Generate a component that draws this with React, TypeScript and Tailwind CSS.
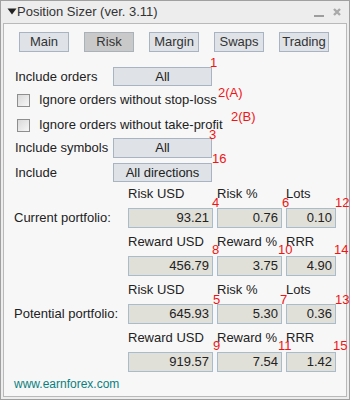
import React from "react";

// red annotation marks laid over the dialog
const marks: { text: string; pos: string }[] = [
  { text: "1", pos: "left-[209px] top-[55px]" },
  { text: "2(A)", pos: "left-[217px] top-[85px]" },
  { text: "2(B)", pos: "left-[230px] top-[109px]" },
  { text: "3", pos: "left-[208px] top-[127px]" },
  { text: "16", pos: "left-[211px] top-[151px]" },
  { text: "4", pos: "left-[211px] top-[195px]" },
  { text: "6", pos: "left-[281px] top-[195px]" },
  { text: "12", pos: "left-[334px] top-[195px]" },
  { text: "8", pos: "left-[211px] top-[242px]" },
  { text: "10", pos: "left-[277px] top-[242px]" },
  { text: "14", pos: "left-[333px] top-[242px]" },
  { text: "5", pos: "left-[212px] top-[292px]" },
  { text: "7", pos: "left-[279px] top-[292px]" },
  { text: "13", pos: "left-[334px] top-[292px]" },
  { text: "9", pos: "left-[212px] top-[338px]" },
  { text: "11", pos: "left-[277px] top-[338px]" },
  { text: "15", pos: "left-[332px] top-[338px]" },
];

const tabs = ["Main", "Risk", "Margin", "Swaps", "Trading"];

function Tab({ label, active }: { label: string; active?: boolean }) {
  return (
    <div
      className={`flex h-[20px] w-[50px] items-center justify-center border text-[#333] ${
        active ? "border-[#a9b1ba] bg-[#c9c9c9]" : "border-[#a8b4c1] bg-[#dfe2e7]"
      }`}
    >
      {label}
    </div>
  );
}

function SelectButton({ label, tall }: { label: string; tall?: boolean }) {
  return (
    <div
      className={`flex w-[99px] items-center justify-center border border-[#a8b4c1] bg-[#dfe2e7] ${
        tall ? "h-[20px]" : "h-[19px]"
      }`}
    >
      {label}
    </div>
  );
}

function Check({ label }: { label: string }) {
  return (
    <div className="flex h-[20px] items-center pl-[13px]">
      <div className="h-[13px] w-[13px] border border-[#8e8e8e] bg-gradient-to-br from-[#d9d9d9] to-[#f7f7f7]" />
      <span className="ml-[9px]">{label}</span>
    </div>
  );
}

function Field({ value }: { value: string }) {
  return (
    <div className="flex items-center justify-end border border-[#a9bccd] bg-[#e0dfd8] pr-[3px]">
      {value}
    </div>
  );
}

function Head({ children, first }: { children: React.ReactNode; first?: boolean }) {
  return <div className={`flex items-center ${first ? "pb-[2px]" : ""}`}>{children}</div>;
}

export default function App() {
  return (
    <div className="h-[400px] w-[350px] bg-white">
      <div className="relative h-[400px] w-[350px] overflow-hidden border border-[#a0a0a0] bg-[#ededed] font-['Liberation_Sans',Arial,sans-serif] text-[13px] text-[#222]">
        {/* Title bar */}
        <div className="flex h-[22px] items-center pl-[6px] pr-[7px] text-[#333]">
          <svg width="10" height="7" viewBox="0 0 10 7" className="mb-[1px]">
            <path d="M0.5 0.5 H9.5 L5 6.5 Z" fill="#222" />
          </svg>
          <span className="ml-[0px]">Position Sizer (ver. 3.11)</span>
          <svg width="30" height="12" viewBox="0 0 30 12" className="ml-auto">
            <rect x="2" y="9" width="10" height="2" fill="#9d9d9d" />
            <path d="M22 3 L28 9 M28 3 L22 9" stroke="#a9a9a9" strokeWidth="2.4" />
          </svg>
        </div>

        {/* Panel */}
        <div className="mx-[2px] h-[374px] border border-[#b9b9b9] bg-[#f7f7f7]">
          <div className="mt-[8px] flex gap-[15px] pl-[15px]">
            {tabs.map((t) => (
              <Tab key={t} label={t} active={t === "Risk"} />
            ))}
          </div>

          <div className="mt-[15px] flex h-[19px] items-center pl-[11px]">
            <span className="w-[98px]">Include orders</span>
            <SelectButton label="All" />
          </div>

          <div className="mt-[4px]">
            <Check label="Ignore orders without stop-loss" />
          </div>
          <div className="mt-[5px]">
            <Check label="Ignore orders without take-profit" />
          </div>

          <div className="mt-[3px] flex h-[20px] items-center pl-[11px]">
            <span className="w-[98px]">Include symbols</span>
            <SelectButton label="All" tall />
          </div>
          <div className="mt-[5px] flex h-[19px] items-center pl-[11px]">
            <span className="w-[98px]">Include</span>
            <SelectButton label="All directions" />
          </div>

          {/* Portfolio figures */}
          <div className="grid grid-cols-[110px_85px_65px_50px] grid-rows-[26px_20px_28px_20px_28px_20px_28px_20px] gap-x-[4px] pl-[10px]">
            <div />
            <Head first>Risk USD</Head>
            <Head first>Risk %</Head>
            <Head first>Lots</Head>

            <div className="flex items-center">Current portfolio:</div>
            <Field value="93.21" />
            <Field value="0.76" />
            <Field value="0.10" />

            <div />
            <Head>Reward USD</Head>
            <Head>Reward %</Head>
            <Head>RRR</Head>

            <div />
            <Field value="456.79" />
            <Field value="3.75" />
            <Field value="4.90" />

            <div />
            <Head>Risk USD</Head>
            <Head>Risk %</Head>
            <Head>Lots</Head>

            <div className="flex items-center">Potential portfolio:</div>
            <Field value="645.93" />
            <Field value="5.30" />
            <Field value="0.36" />

            <div />
            <Head>Reward USD</Head>
            <Head>Reward %</Head>
            <Head>RRR</Head>

            <div />
            <Field value="919.57" />
            <Field value="7.54" />
            <Field value="1.42" />
          </div>

          <div className="flex h-[23px] items-center pl-[10px] text-[12px] text-[#0b7f7f]">
            www.earnforex.com
          </div>
        </div>

        {marks.map((m) => (
          <span key={m.text} className={`absolute text-[13px] leading-none text-[#f01414] ${m.pos}`}>
            {m.text}
          </span>
        ))}
      </div>
    </div>
  );
}
